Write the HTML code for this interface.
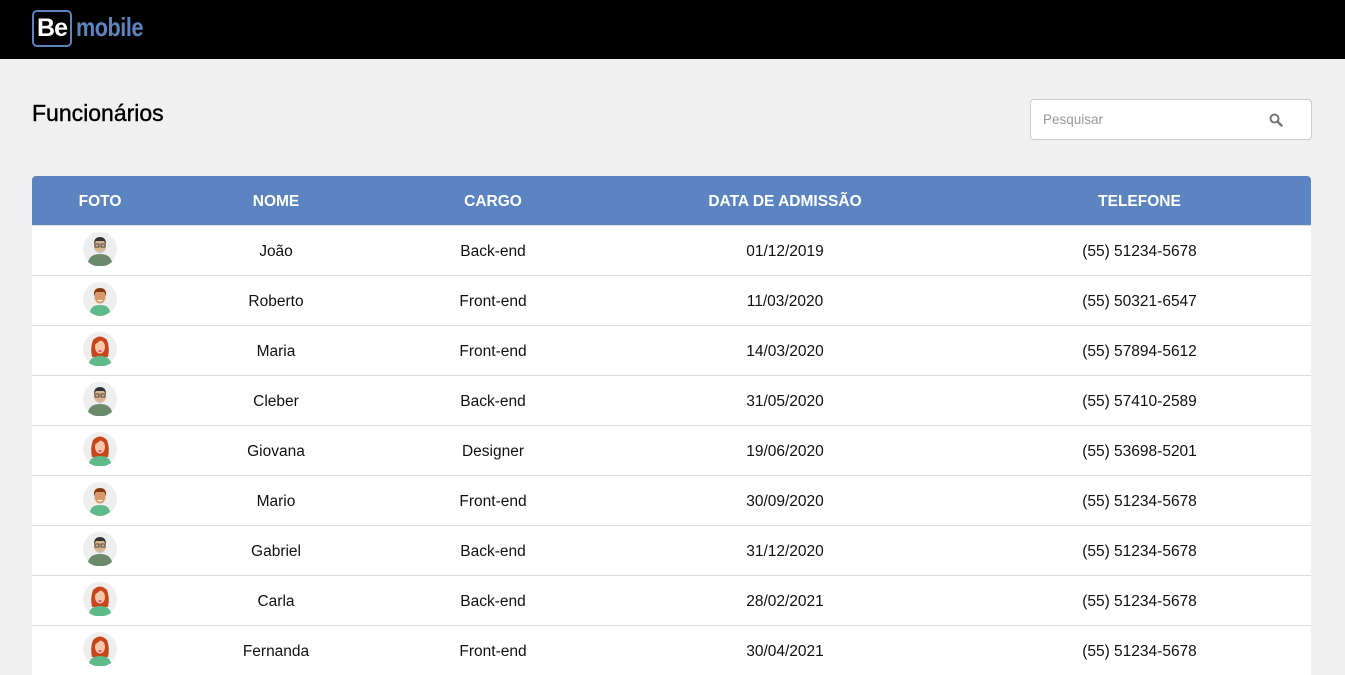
<!DOCTYPE html>
<html><head><meta charset="utf-8"><style>
*{margin:0;padding:0;box-sizing:border-box}
body{width:1345px;height:661px;overflow:hidden;background:#f0f0f0;font-family:"Liberation Sans",Roboto,sans-serif;color:#111}
.hdr{height:59px;background:#000;position:relative}
.logo{position:absolute;left:32px;top:10px;width:40px;height:37px;border:2px solid #5b84c0;border-radius:5px;color:#fff;font-weight:bold;font-size:25px;line-height:33px;text-align:center;letter-spacing:-1px}
.mob{position:absolute;left:76px;top:11px;color:#5b84c0;font-weight:bold;font-size:26px;line-height:33px;transform:scaleX(0.83);transform-origin:0 0;letter-spacing:-0.5px}
h1{position:absolute;left:32px;top:100px;font-size:23px;font-weight:normal;color:#000;-webkit-text-stroke:0.4px #000}
.search{position:absolute;left:1030px;top:99px;width:282px;height:41px;background:#fff;border:1px solid #ccc;border-radius:4px}
.search span{position:absolute;left:12px;top:12px;font-size:13.5px;color:#999}
.search svg{position:absolute;left:238px;top:13px}
table{position:absolute;left:32px;top:176px;width:1279px;border-collapse:collapse;background:#fff;border-radius:4px 4px 0 0;overflow:hidden}
th{background:#5b84c0;color:#fff;height:49px;font-size:15.5px;font-weight:bold;text-align:center;padding-top:3px}
td{height:50px;border-top:1px solid #ddd;text-align:center;font-size:15.5px;color:#111;padding-top:3px}
td svg{display:block;margin:-6px auto 0}
</style></head><body>
<div class="hdr"><div class="logo">Be</div><div class="mob">mobile</div></div>
<h1>Funcionários</h1>
<div class="search"><span>Pesquisar</span><svg width="14" height="14" viewBox="0 0 14 14"><circle cx="5.5" cy="5.5" r="4" fill="none" stroke="#777" stroke-width="2"/><line x1="8.5" y1="8.5" x2="12.5" y2="12.5" stroke="#777" stroke-width="2.4" stroke-linecap="round"/></svg></div>
<svg width="0" height="0" style="position:absolute"><defs>
<symbol id="old" viewBox="0 0 34 34"><circle cx="17" cy="17" r="17" fill="#eee"/><path d="M5 30 Q7 22 17 22 Q27 22 29 30 Q23 35 17 34 Q11 35 5 30Z" fill="#6b8a6b"/><ellipse cx="17" cy="14" rx="6" ry="7" fill="#d9b48f"/><path d="M11 12 Q11 5 17 5 Q23 5 23 12 L21 9 L13 9Z" fill="#333"/><path d="M13 17 Q17 23 21 17 L20 20 Q17 23 14 20Z" fill="#ccc"/><rect x="12" y="12" width="4" height="3" fill="none" stroke="#333" stroke-width="0.8"/><rect x="18" y="12" width="4" height="3" fill="none" stroke="#333" stroke-width="0.8"/></symbol>
<symbol id="boy" viewBox="0 0 34 34"><circle cx="17" cy="17" r="17" fill="#eee"/><path d="M7 30 Q8 23 17 23 Q26 23 27 30 Q22 34 17 34 Q12 34 7 30Z" fill="#5dbb8a"/><ellipse cx="17" cy="15" rx="5.5" ry="6.5" fill="#d89a6a"/><path d="M11 14 Q10 6 17 6 Q24 6 23 14 L21 10 L13 10Z" fill="#8a3a12"/><path d="M14 18 Q17 21 20 18Z" fill="#fff"/></symbol>
<symbol id="girl" viewBox="0 0 34 34"><circle cx="17" cy="17" r="17" fill="#eee"/><path d="M10 8 Q17 1 24 8 Q27 16 25 25 L9 25 Q7 16 10 8Z" fill="#c9461c"/><path d="M6 31 Q8 24 17 24 Q26 24 28 31 Q22 35 17 34 Q12 35 6 31Z" fill="#5dbb8a"/><ellipse cx="17" cy="15" rx="5" ry="6.5" fill="#f5c9a8"/><path d="M11 13 Q12 6 19 7 Q16 10 11 13Z" fill="#c9461c"/><ellipse cx="17" cy="19" rx="1.8" ry="1" fill="#e0508a"/></symbol>
</defs></svg>
<table>
<colgroup><col style="width:136px"><col style="width:216px"><col style="width:218px"><col style="width:366px"><col></colgroup>
<tr><th>FOTO</th><th>NOME</th><th>CARGO</th><th>DATA DE ADMISSÃO</th><th>TELEFONE</th></tr>
<tr><td><svg width="34" height="34"><use href="#old"/></svg></td><td>João</td><td>Back-end</td><td>01/12/2019</td><td>(55) 51234-5678</td></tr>
<tr><td><svg width="34" height="34"><use href="#boy"/></svg></td><td>Roberto</td><td>Front-end</td><td>11/03/2020</td><td>(55) 50321-6547</td></tr>
<tr><td><svg width="34" height="34"><use href="#girl"/></svg></td><td>Maria</td><td>Front-end</td><td>14/03/2020</td><td>(55) 57894-5612</td></tr>
<tr><td><svg width="34" height="34"><use href="#old"/></svg></td><td>Cleber</td><td>Back-end</td><td>31/05/2020</td><td>(55) 57410-2589</td></tr>
<tr><td><svg width="34" height="34"><use href="#girl"/></svg></td><td>Giovana</td><td>Designer</td><td>19/06/2020</td><td>(55) 53698-5201</td></tr>
<tr><td><svg width="34" height="34"><use href="#boy"/></svg></td><td>Mario</td><td>Front-end</td><td>30/09/2020</td><td>(55) 51234-5678</td></tr>
<tr><td><svg width="34" height="34"><use href="#old"/></svg></td><td>Gabriel</td><td>Back-end</td><td>31/12/2020</td><td>(55) 51234-5678</td></tr>
<tr><td><svg width="34" height="34"><use href="#girl"/></svg></td><td>Carla</td><td>Back-end</td><td>28/02/2021</td><td>(55) 51234-5678</td></tr>
<tr><td><svg width="34" height="34"><use href="#girl"/></svg></td><td>Fernanda</td><td>Front-end</td><td>30/04/2021</td><td>(55) 51234-5678</td></tr>
</table>
</body></html>
